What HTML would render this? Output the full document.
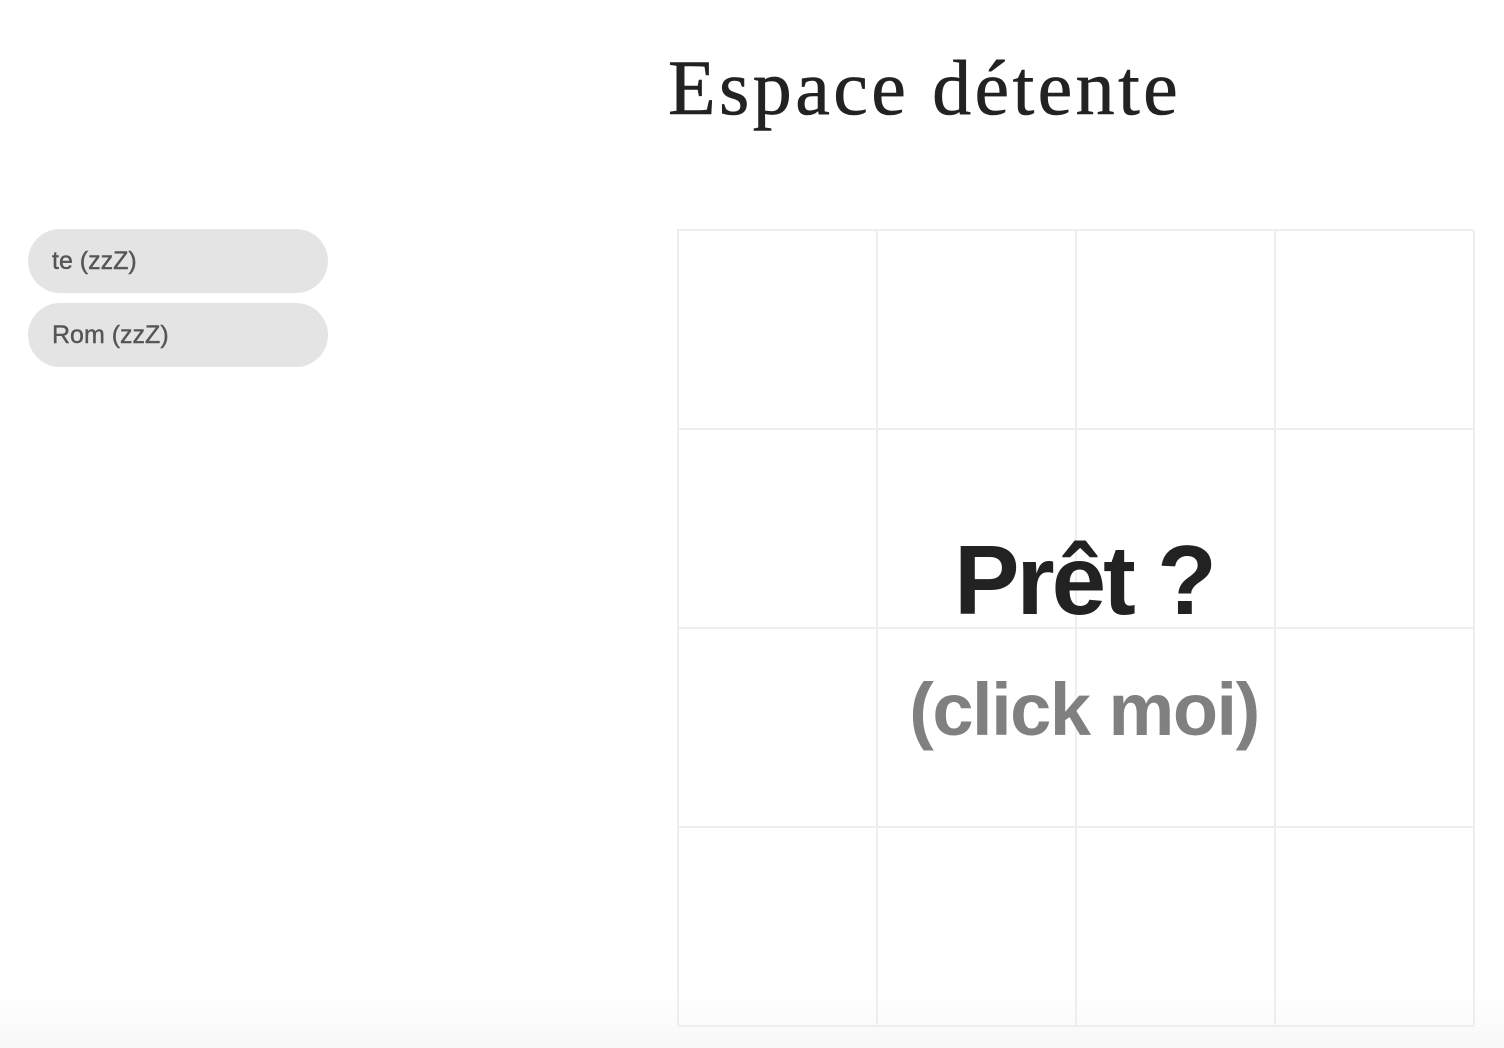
<!DOCTYPE html>
<html><head><meta charset="utf-8"><style>
html,body{margin:0;padding:0}
body{width:1504px;height:1048px;position:relative;overflow:hidden;background:linear-gradient(to bottom,#fff 0,#fff 990px,#f8f8f8 1048px);font-family:"Liberation Sans",sans-serif}
h1{position:absolute;left:668px;top:38px;margin:0;font-family:"Liberation Serif",serif;font-weight:normal;font-size:78px;line-height:100px;color:#222;letter-spacing:3.4px;white-space:nowrap;-webkit-text-stroke:0.6px #222}
.btn{position:absolute;left:28px;width:300px;height:64px;border-radius:32px;background:#e4e4e4;color:#555;font-size:25px;line-height:64px;padding-left:24px;box-sizing:border-box;-webkit-text-stroke:0.4px #555}
.grid{position:absolute;left:677px;top:229px;width:797px;height:797px;box-sizing:border-box;border:2px solid #eee;border-right:none;border-bottom:none}
.c{position:absolute;width:199px;height:199px;box-sizing:border-box;border-right:2px solid #eee;border-bottom:2px solid #eee}
.t1{position:absolute;left:876px;width:416px;text-align:center;top:520px;font-size:98px;font-weight:bold;color:#222;letter-spacing:-3px;line-height:120px}
.t2{position:absolute;left:876px;width:416px;text-align:center;top:660px;font-size:74px;font-weight:bold;color:#808080;letter-spacing:-1.5px;line-height:100px}
</style></head><body>
<h1>Espace détente</h1>
<div class="btn" style="top:229px">te (zzZ)</div>
<div class="btn" style="top:303px">Rom (zzZ)</div>
<div class="grid">
<div class="c" style="left:0;top:0"></div><div class="c" style="left:199px;top:0"></div><div class="c" style="left:398px;top:0"></div><div class="c" style="left:597px;top:0"></div>
<div class="c" style="left:0;top:199px"></div><div class="c" style="left:199px;top:199px"></div><div class="c" style="left:398px;top:199px"></div><div class="c" style="left:597px;top:199px"></div>
<div class="c" style="left:0;top:398px"></div><div class="c" style="left:199px;top:398px"></div><div class="c" style="left:398px;top:398px"></div><div class="c" style="left:597px;top:398px"></div>
<div class="c" style="left:0;top:597px"></div><div class="c" style="left:199px;top:597px"></div><div class="c" style="left:398px;top:597px"></div><div class="c" style="left:597px;top:597px"></div>
</div>
<div class="t1">Prêt ?</div>
<div class="t2">(click moi)</div>
</body></html>
